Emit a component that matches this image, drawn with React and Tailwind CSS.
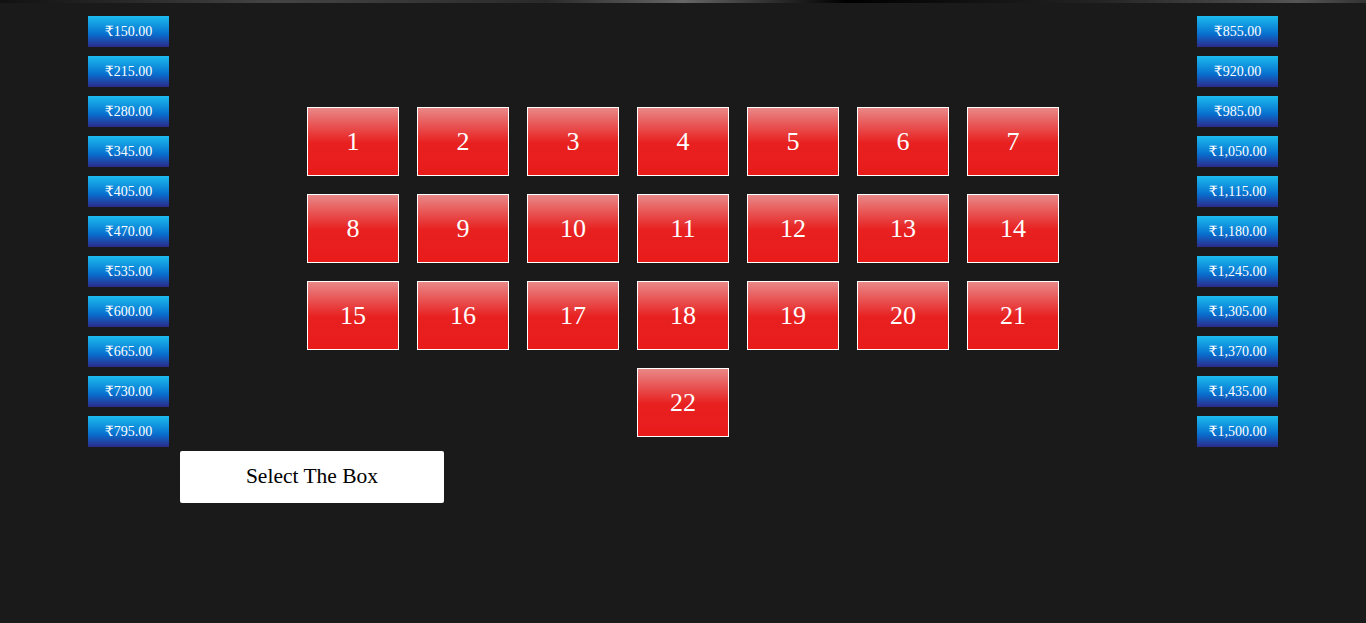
import React from "react";

const left = ["₹150.00","₹215.00","₹280.00","₹345.00","₹405.00","₹470.00","₹535.00","₹600.00","₹665.00","₹730.00","₹795.00"];
const right = ["₹855.00","₹920.00","₹985.00","₹1,050.00","₹1,115.00","₹1,180.00","₹1,245.00","₹1,305.00","₹1,370.00","₹1,435.00","₹1,500.00"];

function Price({ v }) {
  return (
    <div className="w-[81px] h-[31px] flex items-center justify-center text-white text-[14px] leading-none bg-[linear-gradient(to_bottom,#1bbcef,#0870cf_58%,#2c2a8a)]">
      {v}
    </div>
  );
}

function Box({ n }) {
  return (
    <div className="w-[92px] h-[69px] border border-white flex items-center justify-center text-white text-[26px] leading-none bg-[linear-gradient(to_bottom,#e98888,#e82020_52%,#e91b1b)]">
      {n}
    </div>
  );
}

export default function App() {
  const nums = Array.from({ length: 21 }, (_, i) => i + 1);
  return (
    <div className="w-[1366px] h-[623px] bg-[#1a1a1a] overflow-hidden" style={{ fontFamily: '"Liberation Serif", "DejaVu Serif", serif' }}>
      <div className="h-[3px] bg-[linear-gradient(to_right,#111,#444_20%,#2a2a2a_40%,#666_50%,#000_62%,#222_80%,#555_95%,#333)]" />
      <div className="flex justify-between px-[88px] pt-[13px]">
        <div className="flex flex-col gap-[9px]">
          {left.map((v) => <Price key={v} v={v} />)}
        </div>
        <div className="pt-[91px] flex flex-col items-center gap-[18px]">
          <div className="grid grid-cols-7 gap-[18px]">
            {nums.map((n) => <Box key={n} n={n} />)}
          </div>
          <Box n={22} />
        </div>
        <div className="flex flex-col gap-[9px]">
          {right.map((v) => <Price key={v} v={v} />)}
        </div>
      </div>
      <div className="ml-[180px] mt-[4px] w-[264px] h-[52px] bg-white rounded-[2px] flex items-center justify-center text-black text-[21.5px] leading-none pb-[1px]">
        Select The Box
      </div>
    </div>
  );
}
